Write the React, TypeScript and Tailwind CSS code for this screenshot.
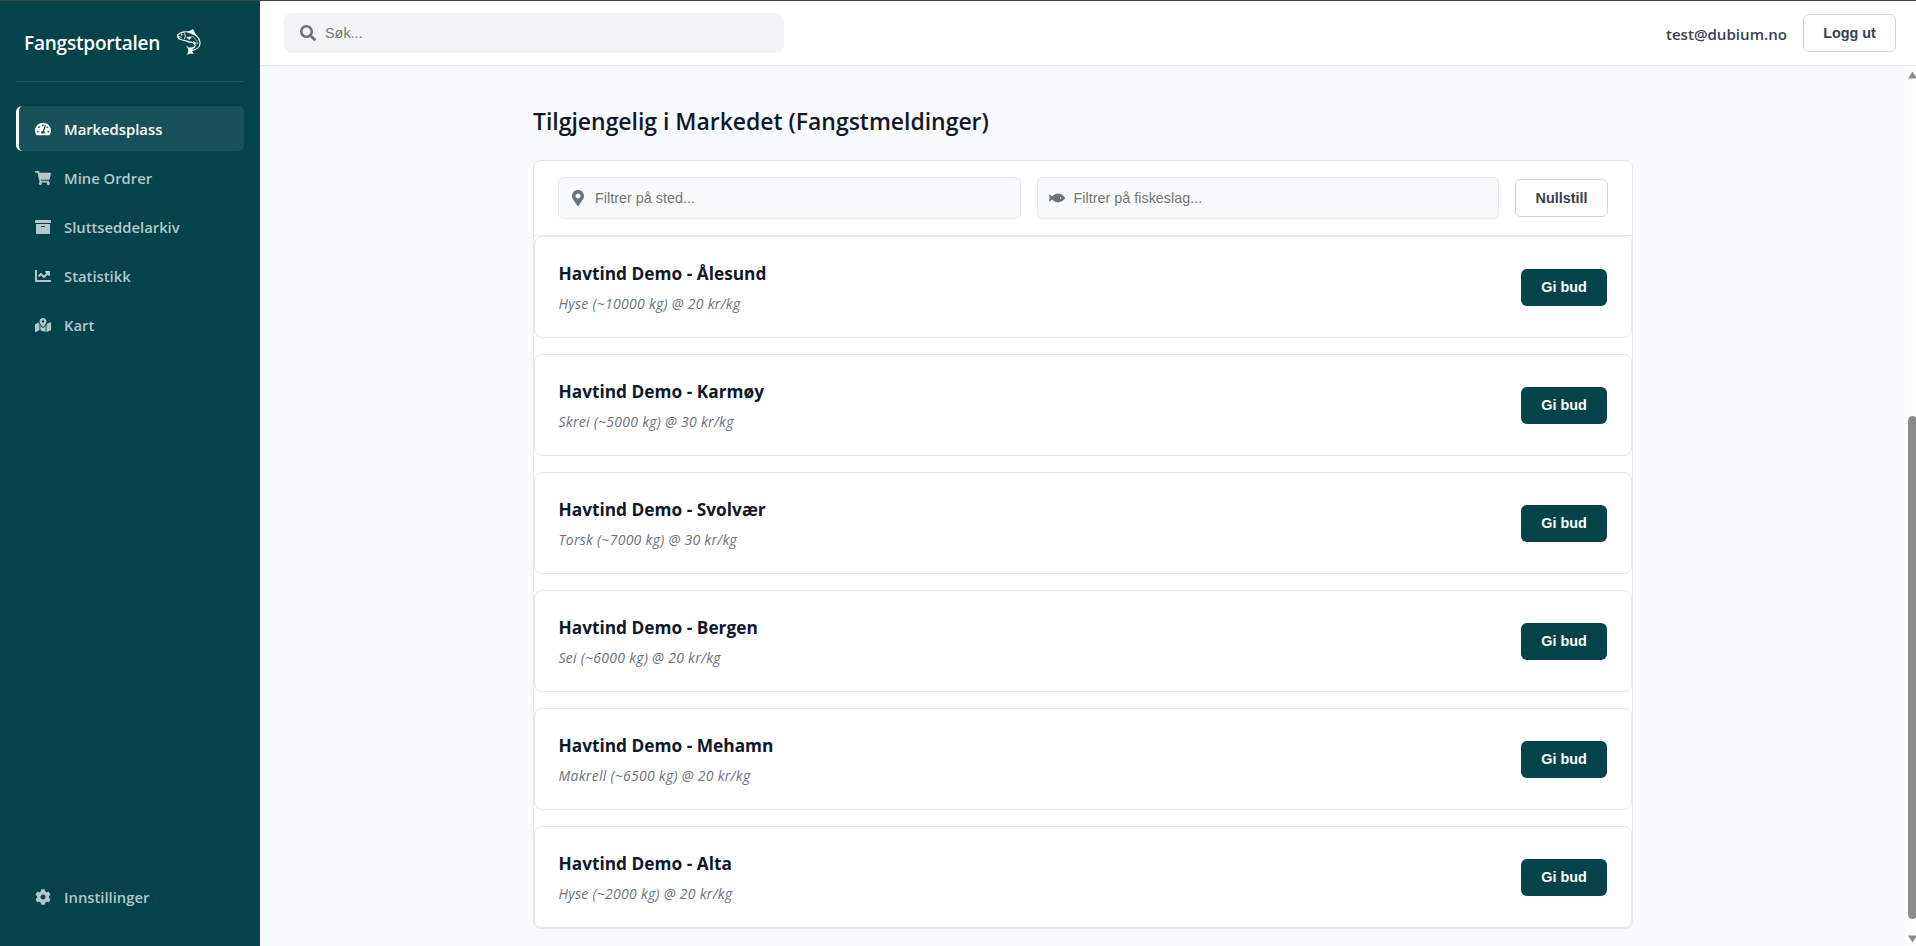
import type { ReactNode } from 'react';
import type { IconType } from 'react-icons';
import {
  FaTachometerAlt,
  FaShoppingCart,
  FaArchive,
  FaChartLine,
  FaMapMarkedAlt,
  FaCog,
  FaSearch,
  FaMapMarkerAlt,
  FaFish,
} from 'react-icons/fa';

const navItems: { label: string; icon: IconType; active?: boolean }[] = [
  { label: 'Markedsplass', icon: FaTachometerAlt, active: true },
  { label: 'Mine Ordrer', icon: FaShoppingCart },
  { label: 'Sluttseddelarkiv', icon: FaArchive },
  { label: 'Statistikk', icon: FaChartLine },
  { label: 'Kart', icon: FaMapMarkedAlt },
];

const catches = [
  { place: 'Ålesund', details: 'Hyse (~10000 kg) @ 20 kr/kg' },
  { place: 'Karmøy', details: 'Skrei (~5000 kg) @ 30 kr/kg' },
  { place: 'Svolvær', details: 'Torsk (~7000 kg) @ 30 kr/kg' },
  { place: 'Bergen', details: 'Sei (~6000 kg) @ 20 kr/kg' },
  { place: 'Mehamn', details: 'Makrell (~6500 kg) @ 20 kr/kg' },
  { place: 'Alta', details: 'Hyse (~2000 kg) @ 20 kr/kg' },
];

function FishLogo() {
  return (
    <svg className="mt-0.5 h-[26px] w-6 text-white" viewBox="0 0 24 26" fill="none" stroke="currentColor" strokeLinecap="round" strokeLinejoin="round">
      <path d="M.7 6.2C3 3.2 8 2 12.500 3.200C18 4.500 22.600 8.500 23 13.500C23.300 17.500 20 20.500 15.500 21.300" strokeWidth="1.200" />
      <path d="M.7 6.200C.6 8.500 2.500 10.500 5.500 11C9 11.600 10.500 12.800 13.500 13.200C16.800 13.600 18.500 15 18 17C17.600 18.600 15.500 19.200 13 19" strokeWidth="1.200" />
      <path d="M11 3L16 .5L18.600 6Z" fill="currentColor" strokeWidth=".6" />
      <path d="M10 17.500C11 19 13.300 19.200 15.800 19.300C14.500 21.200 15 23.500 16.400 24.600C14 24 12 24.400 10.200 25.300C12 23.500 12.300 20.500 10 17.500Z" fill="currentColor" strokeWidth=".6" />
      <path d="M1 7.500L4.500 8.300M7.500 4.500C8.600 6 8.600 8 7.400 9.800" strokeWidth=".9" />
      <path d="M10 8.300L14.500 7.700L12.500 10.500Z" fill="currentColor" strokeWidth=".5" />
      <path d="M15.500 7.500C18.500 9.500 20.500 12.500 20.300 15.800" strokeWidth=".8" strokeDasharray="1.200 1.300" />
      <path d="M16.500 12.500L19 14.500" strokeWidth="1" />
      <circle cx="4.700" cy="5.700" r=".9" fill="currentColor" stroke="none" />
    </svg>
  );
}

function NavItem({ label, icon: Icon, active }: { label: string; icon: IconType; active?: boolean }) {
  return (
    <a
      className={
        active
          ? 'flex h-[45px] items-center gap-[13px] rounded-md border-l-[3px] border-white bg-white/[0.08] pl-4 text-white'
          : 'flex h-[45px] items-center gap-[13px] rounded-md border-l-[3px] border-transparent pl-4 text-[#b4c7c9]'
      }
    >
      <Icon size={16} />
      <span className="pt-0.5 text-[14.8px] font-semibold">{label}</span>
    </a>
  );
}

function OutlineButton({ children, className }: { children: ReactNode; className: string }) {
  return (
    <button
      className={`${className} shrink-0 rounded-md border border-[#d1d5db] bg-white pt-0.5 font-['Liberation_Sans',sans-serif] text-[14.4px] font-bold text-[#374151]`}
    >
      {children}
    </button>
  );
}

function FilterField({ icon: Icon, placeholder }: { icon: IconType; placeholder: string }) {
  return (
    <label className="flex h-[42px] flex-1 items-center gap-[9px] rounded-md border border-[#e5e7eb] bg-[#f9fafb] pl-[11px]">
      <Icon size={16} className="shrink-0 text-[#6b7280]" />
      <input
        className="min-w-0 flex-1 bg-transparent pt-0.5 font-['Liberation_Sans',sans-serif] text-[14.4px] outline-none placeholder:text-[#757575]"
        placeholder={placeholder}
      />
    </label>
  );
}

export default function App() {
  return (
    <div className="flex h-[946px] w-[1916px] flex-col overflow-hidden border-t border-[#434343] bg-[#f9fafc] font-['Open_Sans','Noto_Sans',sans-serif]">
      <div className="flex min-h-0 flex-1">
        <aside className="flex w-[260px] shrink-0 flex-col bg-[#05434b] px-4 pb-[27px]">
          <div className="flex h-[81px] items-center gap-[17px] border-b border-white/10 pl-2">
            <span className="pt-[5px] text-[19px] font-semibold tracking-[-0.2px] text-white">Fangstportalen</span>
            <FishLogo />
          </div>
          <nav className="mt-6 flex flex-1 flex-col gap-1">
            {navItems.map((item) => (
              <NavItem key={item.label} {...item} />
            ))}
          </nav>
          <NavItem label="Innstillinger" icon={FaCog} />
        </aside>

        <div className="flex min-w-0 flex-1 flex-col">
          <header className="flex h-[65px] shrink-0 items-center border-b border-[#e5e7eb] bg-white pl-6 pr-5">
            <label className="flex h-10 w-[500px] items-center gap-[9px] rounded-lg bg-[#f3f4f6] pl-4">
              <FaSearch size={16} className="text-[#6b7280]" />
              <input
                className="flex-1 bg-transparent pt-0.5 font-['Liberation_Sans',sans-serif] text-[14.4px] outline-none placeholder:text-[#757575]"
                placeholder="Søk..."
              />
            </label>
            <span className="ml-auto mr-4 pt-0.5 text-[15.1px] font-semibold text-[#374151]">test@dubium.no</span>
            <OutlineButton className="h-[38px] w-[93px]">Logg ut</OutlineButton>
          </header>

          <div className="flex min-h-0 flex-1">
            <main className="flex-1 pl-[273px] pt-[39px]">
              <h1 className="text-[23px] font-semibold leading-8 tracking-[-0.03px] text-[#111827]">
                Tilgjengelig i Markedet (Fangstmeldinger)
              </h1>
              <section className="mt-[23px] w-[1100px] rounded-lg border border-[#e5e7eb] bg-white">
                <div className="flex h-[75px] items-center gap-4 border-b border-[#e5e7eb] px-6">
                  <FilterField icon={FaMapMarkerAlt} placeholder="Filtrer på sted..." />
                  <FilterField icon={FaFish} placeholder="Filtrer på fiskeslag..." />
                  <OutlineButton className="h-[38px] w-[93px]">Nullstill</OutlineButton>
                </div>
                <ul className="flex flex-col gap-4">
                  {catches.map((c) => (
                    <li
                      key={c.place}
                      className="flex h-[102px] items-center justify-between rounded-lg border border-[#e5e7eb] bg-white pl-[23.5px] pr-6"
                    >
                      <div className="pt-px">
                        <h2 className="text-[17.3px] font-bold leading-6 text-[#111827]">Havtind Demo - {c.place}</h2>
                        <p className="mt-2 text-[14px] italic leading-[19px] tracking-[0.28px] text-[#6b7280]">{c.details}</p>
                      </div>
                      <button className="h-[37px] w-[86px] rounded-md bg-[#05434b] pt-0.5 font-['Liberation_Sans',sans-serif] text-[14.4px] font-bold text-white">
                        Gi bud
                      </button>
                    </li>
                  ))}
                </ul>
              </section>
            </main>

            <div className="flex w-[11px] shrink-0 flex-col overflow-hidden bg-[#fcfcfc] pl-[3px]">
              <svg className="mt-[5px] h-2 w-[9px] shrink-0" viewBox="0 0 9 8">
                <path d="M4.500 0.500L9 7.500H0Z" fill="#8b8b8b" />
              </svg>
              <div className="mt-[337px] h-[503px] w-[9px] shrink-0 rounded-full bg-[#8b8b8b]" />
              <svg className="mt-4 h-2 w-[9px] shrink-0" viewBox="0 0 9 8">
                <path d="M4.500 7.500L9 .5H0Z" fill="#8b8b8b" />
              </svg>
            </div>
          </div>
        </div>
      </div>
    </div>
  );
}
